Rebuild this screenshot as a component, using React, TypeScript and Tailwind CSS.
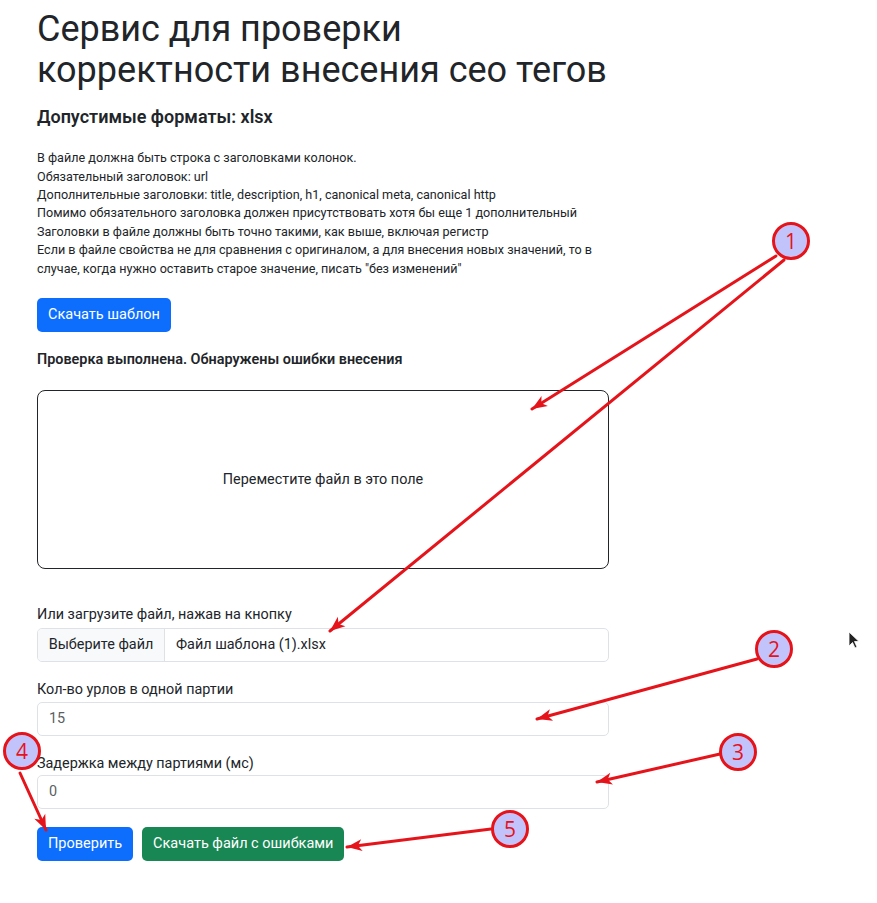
import React from "react";

const rules = [
  "В файле должна быть строка с заголовками колонок.",
  "Обязательный заголовок: url",
  "Дополнительные заголовки: title, description, h1, canonical meta, canonical http",
  "Помимо обязательного заголовка должен присутствовать хотя бы еще 1 дополнительный",
  "Заголовки в файле должны быть точно такими, как выше, включая регистр",
  'Если в файле свойства не для сравнения с оригиналом, а для внесения новых значений, то в случае, когда нужно оставить старое значение, писать "без изменений"',
];

// annotation arrows: [x1, y1, x2, y2]
const arrows: [number, number, number, number][] = [
  [776, 256, 532, 409],
  [784, 260, 330, 631],
  [757, 659, 537, 719],
  [720, 754, 597, 782],
  [20, 773, 46, 830],
  [491, 829, 347, 847],
];

const marks: [string, number, number][] = [
  ["1", 791, 241],
  ["2", 774, 649],
  ["3", 738, 752],
  ["4", 22, 751],
  ["5", 510, 829],
];

function Arrow({ a }: { a: [number, number, number, number] }) {
  const [x1, y1, x2, y2] = a;
  const ang = (Math.atan2(y2 - y1, x2 - x1) * 180) / Math.PI;
  return (
    <g>
      <line x1={x1} y1={y1} x2={x2} y2={y2} stroke="#e5141b" strokeWidth={3} strokeLinecap="round" />
      <path
        d="M0 0 L-15 -6 L-11 0 L-15 6 Z"
        fill="#e5141b"
        transform={`translate(${x2} ${y2}) rotate(${ang})`}
      />
    </g>
  );
}

function Annotations() {
  return (
    <svg
      className="absolute left-0 top-0 pointer-events-none"
      width={877}
      height={903}
      viewBox="0 0 877 903"
    >
      {arrows.map((a, i) => (
        <Arrow key={i} a={a} />
      ))}
      {marks.map(([n, cx, cy]) => (
        <g key={n}>
          <circle cx={cx} cy={cy} r={17.5} fill="#c3c3fb" stroke="#e5141b" strokeWidth={3} />
          <text
            x={cx}
            y={cy + 7.5}
            textAnchor="middle"
            fontSize={21}
            fill="#e5141b"
            fontFamily="'Open Sans', 'DejaVu Sans', sans-serif"
          >
            {n}
          </text>
        </g>
      ))}
      {/* mouse pointer */}
      <path
        d="M849 632 L849 646 L852.5 642.5 L855 648 L857 647 L854.5 641.5 L859 641.5 Z"
        fill="#222"
        stroke="#fff"
        strokeWidth={0.8}
      />
    </svg>
  );
}

export default function App() {
  return (
    <div className="relative min-h-[903px] bg-white text-[#212529] font-['Roboto','Liberation_Sans',sans-serif]">
      <div className="w-[572px] ml-[37px] pt-[9px]">
        <h1 className="text-[36px] leading-[40.8px] font-normal mb-[15px] whitespace-nowrap">
          Сервис для проверки
          <br />
          корректности внесения сео тегов
        </h1>
        <h5 className="text-[18px] leading-[1.2] font-semibold mb-[22px]">
          Допустимые форматы: xlsx
        </h5>

        <div className="text-[12.6px] leading-[18.4px]">
          {rules.map((r) => (
            <div key={r}>{r}</div>
          ))}
        </div>

        <button className="mt-[20px] h-[34px] px-[11px] rounded-[5px] bg-[#0d6efd] text-white text-[14.5px]">
          Скачать шаблон
        </button>

        <p className="mt-[17px] text-[14.4px] leading-[21px] font-semibold">
          Проверка выполнена. Обнаружены ошибки внесения
        </p>

        <div className="mt-[20px] h-[179px] border border-[#212529] rounded-[8px] flex items-center justify-center text-[14.4px]">
          Переместите файл в это поле
        </div>

        <label className="block mt-[35px] text-[14.4px] leading-[21px]">
          Или загрузите файл, нажав на кнопку
        </label>
        <div className="mt-[3px] h-[34px] flex border border-[#dee2e6] rounded-[5px] overflow-hidden text-[14.4px]">
          <div className="w-[127px] shrink-0 flex items-center justify-center bg-[#f8f9fa] border-r border-[#dee2e6]">
            Выберите файл
          </div>
          <div className="flex items-center pl-[11px]">Файл шаблона (1).xlsx</div>
        </div>

        <label className="block mt-[17px] text-[14.4px] leading-[21px]">
          Кол-во урлов в одной партии
        </label>
        <div className="mt-[2px] h-[34px] flex items-center px-[11px] border border-[#dee2e6] rounded-[5px] text-[14.4px] text-[#595f64]">
          15
        </div>

        <label className="block mt-[17px] text-[14.4px] leading-[21px]">
          Задержка между партиями (мс)
        </label>
        <div className="mt-[1px] h-[34px] flex items-center px-[11px] border border-[#dee2e6] rounded-[5px] text-[14.4px] text-[#595f64]">
          0
        </div>

        <div className="mt-[18px] flex gap-[9px]">
          <button className="h-[34px] px-[11px] rounded-[5px] bg-[#0d6efd] text-white text-[14.5px]">
            Проверить
          </button>
          <button className="h-[34px] px-[11px] rounded-[5px] bg-[#198754] text-white text-[14.5px]">
            Скачать файл с ошибками
          </button>
        </div>
      </div>
      <Annotations />
    </div>
  );
}
